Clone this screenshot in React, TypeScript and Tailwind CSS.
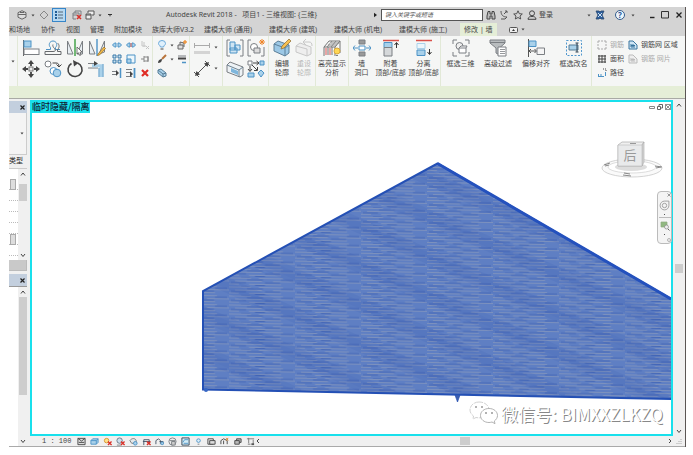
import React from "react";

type Kids = { children?: React.ReactNode };

const FONT = "font-['Noto_Sans','Noto_Sans_CJK_SC',sans-serif]";
const G = "#7b7f83";
const B = "#a9d1ea";
const D = "#4d93c6";

function Art({ s, w, children }: Kids & { s: string; w?: string }) {
  return (
    <svg viewBox={w ?? "0 0 18 18"} className={`${s} block shrink-0`} fill="none" stroke={G} strokeWidth="1" aria-hidden="true">
      {children}
    </svg>
  );
}

function Btn({ label, children, className = "" }: Kids & { label: string; className?: string }) {
  return (
    <button type="button" aria-label={label} className={`flex items-center justify-center ${className}`}>
      {children}
    </button>
  );
}

function Caret({ className = "" }: { className?: string }) {
  return (
    <svg viewBox="0 0 4 3" className={`block h-[3px] w-1 shrink-0 ${className}`} aria-hidden="true">
      <path d="M.5 .5h3L2 2.500z" fill="#444" />
    </svg>
  );
}

function Chevron({ d }: { d: "up" | "down" | "left" | "right" }) {
  const paths = { up: "M1 4.500 3 2l2 2.500", down: "M1 2l2 2.500L5 2", left: "M4 1 2 3l2 2", right: "M2 1l2 2-2 2" };
  return (
    <svg viewBox="0 0 6 6" className="block size-1.5" fill="none" stroke="#444" strokeWidth="1" aria-hidden="true">
      <path d={paths[d]} />
    </svg>
  );
}

const big = "size-[18px]";
const small = "size-[10px]";
const S = "0 0 10 10";

const modifyBig: [string, React.ReactNode][] = [
  ["对齐", <><path d="M1.500 1v16" stroke="#666" /><rect x="2" y="2" width="7" height="6" fill={B} stroke={D} /><rect x="2" y="10" width="15" height="5.500" fill="#fff" /></>],
  ["偏移", <><path d="M2 10.500h4.500V8.500C4 6 5.500 2 9 2s5 4 2.500 6.500v2H16" stroke={D} /><path d="M1 15.500h16v-3h-3.500V11c3-4 1-6 0-7M1 15.500v-3h8c2.500 0 3-1 1.500-3C8 7 9 5.500 9 5.500" stroke="#66696c" /></>],
  ["镜像 - 拾取轴", <><path d="M1.500 15V2L7 15zM16.500 15V2L11 15z" fill="#e8eef2" /><path d="M9 0v17" stroke="#45a34a" strokeWidth="1.500" /><path d="m11 8 5 5-2 .3 1 2.700-1.500.3-1-2.500-1.500 1z" fill="#fff" stroke="#555" strokeWidth=".8" /></>],
  ["镜像 - 绘制轴", <><path d="M1.500 15V2L7 15zM16.500 13V2L11 15z" fill="#e8eef2" /><path d="M9 0v17" stroke={D} strokeWidth="1.400" /><path d="m10 15 6-7 1.500 1.500-6 6.500-2 .5z" fill="#f5bd48" stroke="#966a20" strokeWidth=".7" /></>],
  ["移动", <><path d="M9 2v4M9 12v4M2 9h4M12 9h4" stroke="#444" strokeWidth="1.800" /><path d="M9 0l3 4H6zM9 18l3-4H6zM0 9l4-3v6zM18 9l-4-3v6z" fill="#444" stroke="none" /><rect x="7" y="7" width="4" height="4" fill="#eee" stroke="#777" /></>],
  ["复制", <><circle cx="4" cy="4" r="3" fill="#fff" /><path d="M8.500 3H12c2 0 3 1 3 3.500M12.500 4.500l2.500 2.500 2.500-2.500" stroke="#444" /><circle cx="9.500" cy="11" r="3.500" fill="#fff" stroke={D} /><circle cx="13" cy="13" r="3.800" fill={B} stroke={D} /></>],
  ["旋转", <><path d="M5.500 3.500a7 7 0 1 0 6-.5" stroke="#444" strokeWidth="1.600" /><path d="m7 0 5.500 3L8 6.500z" fill="#444" stroke="none" /></>],
  ["修剪/延伸为角", <><path d="M0 3.500h9M0 8h10" /><path d="M4 5.800h9V17" stroke={B} strokeWidth="3" /><path d="M11 8v9M15 4v13" stroke={D} /><path d="M6 1l4 2.500L6 6z" fill="#444" stroke="none" /></>],
];

const modifySmall: [string, React.ReactNode][] = [
  ["拆分图元", <path d="m.5 5 2-2H4v4H2.500zM9.500 5l-2-2H6v4h1.500z" fill={B} stroke={D} />],
  ["用间隙拆分", <><path d="m.5 5 2-2H4v4H2.500zM9.500 5l-2-2H6v4h1.500z" fill={B} stroke={D} /><path d="M5 3v4" stroke="#d45b51" /></>],
  ["解锁", <g stroke="#c4c4c4"><path d="M2 1v5h4M4 2v5M6 6l3 3M9 6 6 9" /></g>],
  ["阵列", <path d="M1 1h3v3H1zM6 1h3v3H6zM1 6h3v3H1zM6 6h3v3H6z" fill="#c9e2f1" stroke="#3878a8" />],
  ["缩放", <><path d="M1 1h8v8H1z" fill="#edf6fb" stroke={D} /><path d="M1 5h4v4H1z" fill={B} stroke={D} /></>],
  ["锁定", <path d="M1 5h3M4 2v6M4 3h4v4H4M8 2v6" stroke="#888" />],
  ["修剪/延伸单个图元", <><path d="M0 3.500h5M0 6.500h5" /><path d="M4 2l3 3-3 3z" fill="#444" stroke="none" /><path d="M8.500 0v10" stroke={D} strokeWidth="1.500" /></>],
  ["修剪/延伸多个图元", <><path d="M0 1.500h6M0 4.500h5M0 8.500h6" /><path d="M4 3l3 3-3 3z" fill="#444" stroke="none" /><path d="M8.500 0v10" stroke={D} strokeWidth="1.800" /></>],
  ["删除", <path d="m2 2 6 6M8 2 2 8" stroke="#df2c25" strokeWidth="2.200" />],
];

function Tool({ lines, icon, off, w }: { lines: string[]; icon: React.ReactNode; off?: boolean; w: string }) {
  return (
    <button type="button" className={`flex shrink-0 flex-col items-center pt-[3px] text-[7px] leading-[9px] ${w} ${off ? "text-[#b8b8b8]" : "text-[#444]"}`}>
      <Art s="size-[18px] mb-[2px]">{icon}</Art>
      {lines.map((l) => <span key={l} className="whitespace-nowrap">{l}</span>)}
    </button>
  );
}

function Group({ children, className = "" }: Kids & { className?: string }) {
  return <section className={`flex shrink-0 border-r border-[#e2e9d7] ${className}`}>{children}</section>;
}

const bracket = <path d="M4 1H1v16h3M14 1h3v16h-3" />;

function TitleBar() {
  return (
    <header className="flex h-4 items-center bg-[#d4d4d4] pl-2 text-[#444]">
      <Btn label="主视图"><Art s={small} w={S}><path d="m5 .7 4 2v4.500l-4 2-4-2V2.700z" fill="#ddd" stroke="#666" /><path d="M1 4.500h8M3 2.500h4" stroke="#666" /></Art></Btn>
      <Caret className="ml-1" />
      <Btn label="同步" className="ml-1"><Art s={small} w={S}><path d="m5 1 4 4-4 4-4-4z" stroke="#888" /></Art></Btn>
      <button type="button" aria-label="属性" className="ml-[3px] flex h-3.5 w-[14px] items-center justify-center border border-[#3685c8] bg-[#b6d8f1]">
        <Art s={small} w={S}><path d="M1 2h2M1 5h2M1 8h2" stroke="#225c93" strokeWidth="2" /><path d="M4 2h5M4 5h5M4 8h5" stroke="#567" /></Art>
      </button>
      <Btn label="关闭隐藏窗口" className="ml-1.5"><Art s={small} w={S}><path d="M1 9V3h6v3M3 3V1h6v4M1 5h4M1 9h3" /><path d="m5 5 4 4M9 5 5 9" stroke="#d8312b" strokeWidth="1.600" /></Art></Btn>
      <Btn label="切换窗口" className="ml-[3px]"><Art s={small} w={S}><path d="M3 3V1h6v4H7M1 4h5v5H1zM1 5h5" stroke="#555" fill="#eee" /></Art></Btn>
      <Caret className="ml-[3px]" />
      <Caret className="ml-1.5 border-t border-[#333]" />
      <h1 className="ml-[54px] shrink-0 whitespace-pre text-[7px] leading-[10px]">Autodesk Revit 2018 -   项目1 - 三维视图: {"{三维}"}</h1>
      <span className="min-w-0 flex-1" />
      <svg viewBox="0 0 4 6" className="mr-1 h-1.5 w-[3px]" aria-hidden="true"><path d="M0 0l4 3-4 3z" fill="#222" /></svg>
      <input aria-label="搜索" placeholder="键入关键字或短语" className="h-3 w-[102px] border border-[#555] bg-white px-[3px] text-[6px] italic leading-[8px] placeholder:text-[#555]" />
      <Btn label="查找" className="ml-[3px]"><Art s={small} w={S}><path d="M2 1.500h2V4h2V1.500h2L9 6v3H6V6H4v3H1V6z" fill="#bbb" stroke="#444" /></Art></Btn>
      <Btn label="通讯中心" className="ml-[3px]"><Art s={small} w={S}><path d="M2 1c0 4 2 6 6 6L6 9H2M5 4l3-3M6 1h2v2" stroke="#555" /></Art></Btn>
      <Btn label="收藏夹" className="ml-1"><Art s={small} w={S}><path d="m5 .8 1.300 2.900 3 .3L7 6l.7 3L5 7.500 2.300 9 3 6 .7 4l3-.3z" stroke="#444" strokeWidth=".9" /></Art></Btn>
      <button type="button" className="ml-1 flex items-center gap-[2px] text-[7px] leading-[10px]">
        <Art s={small} w={S}><circle cx="5" cy="3.300" r="2.500" stroke="#444" /><path d="M1 9.300C1 7 3 6.500 5 6.500s4 .5 4 2.800z" stroke="#444" /></Art>登录
      </button>
      <Caret className="ml-[34px]" />
      <Btn label="应用商店" className="ml-1"><Art s={small} w={S}><path d="M1 1h3l1 1 1-1h3L7 5l2 4H6L5 8 4 9H1l2-4z" fill="#2d5f9e" stroke="#28466d" strokeWidth=".8" /><path d="m3 3 4 4M7 3 3 7" stroke="#cbdff0" /></Art></Btn>
      <button type="button" aria-label="帮助" className="ml-[10px] flex size-[10px] items-center justify-center rounded-full border border-[#345d8c] bg-[#eef5fb] text-[8px] font-bold leading-[8px] text-[#1e5799]">?</button>
      <Caret className="ml-1.5" />
      <Btn label="最小化" className="ml-[12px]"><Art s={small} w={S}><path d="M3 7.500h4.500" stroke="#222" strokeWidth="1.400" /></Art></Btn>
      <Btn label="最大化" className="ml-[3px]"><Art s={small} w={S}><path d="M1.500 1.500h7v6.500h-7z" stroke="#333" /></Art></Btn>
      <Btn label="关闭" className="ml-1 mr-px"><Art s={small} w={S}><path d="m2.500 2.500 5 5M7.500 2.500l-5 5" stroke="#222" strokeWidth="1.300" /></Art></Btn>
    </header>
  );
}

function Tabs() {
  const t = "shrink-0 whitespace-nowrap";
  return (
    <nav className="flex h-[13px] items-center bg-[#d4d4d4] text-[7px] leading-[11px] text-[#444]">
      <button type="button" className={t}>和场地</button>
      <button type="button" className={`${t} ml-[11px]`}>协作</button>
      <button type="button" className={`${t} ml-[11px]`}>视图</button>
      <button type="button" className={`${t} ml-[10px]`}>管理</button>
      <button type="button" className={`${t} ml-[10px]`}>附加模块</button>
      <button type="button" className={`${t} ml-[10px]`}>族库大师V3.2</button>
      <button type="button" className={`${t} ml-[10px] w-[50px] text-left`}>建模大师 (通用)</button>
      <button type="button" className={`${t} ml-[15px] w-[50px] text-left`}>建模大师 (建筑)</button>
      <button type="button" className={`${t} ml-[15px] w-[50px] text-left`}>建模大师 (机电)</button>
      <button type="button" className={`${t} ml-[15px] w-[50px] text-left`}>建模大师 (施工)</button>
      <button type="button" className={`${t} ml-[11px] h-[13px] bg-[#e5eed7] px-1`}>修改 | 墙</button>
      <button type="button" aria-label="功能区显示" className="ml-[12px] flex items-center gap-[3px]">
        <svg viewBox="0 0 9 6" className="h-1.5 w-[9px]" aria-hidden="true"><rect x=".5" y=".5" width="8" height="5" rx="1" fill="#eee" stroke="#555" /><path d="M3 4l1.500-2L6 4z" fill="#333" /></svg>
        <Caret />
      </button>
    </nav>
  );
}

function Row({ icon, text, off }: { icon: React.ReactNode; text: string; off?: boolean }) {
  return (
    <button type="button" className={`flex h-3.5 items-center gap-[3px] whitespace-nowrap text-[7px] leading-[10px] ${off ? "text-[#aaa]" : "text-[#444]"}`}>
      <Art s={small} w={S}>{icon}</Art>{text}
    </button>
  );
}

function Ribbon() {
  const meshIcon = (c: string, f: string) => <><path d="M1 9V1h4l4 4v4z" stroke={c} fill={f} /><path d="M3 4v3h4M5 4v3M3 5.500h4" stroke={c} /></>;
  return (
    <div className="flex h-[50px] overflow-hidden bg-[#f5f6f5]">
      <Group className="w-[9px] items-center pl-[2px]"><Caret /></Group>
      <Group className="w-[135px] pl-[2px]">
        <div className="mt-px grid h-[42px] grid-cols-[repeat(4,22px)] grid-rows-2">
          {modifyBig.map(([l, i]) => <Btn key={l} label={l}><Art s={big}>{i}</Art></Btn>)}
        </div>
        <div className="ml-[2px] mt-[2px] grid h-[42px] grid-cols-[repeat(3,14px)] grid-rows-3">
          {modifySmall.map(([l, i]) => <Btn key={l} label={l}><Art s={small} w={S}>{i}</Art></Btn>)}
        </div>
      </Group>
      <Group className="w-[37px] pl-px pt-[2px]">
        <div className="grid h-[42px] grid-cols-[16px_4px_16px] grid-rows-3 items-center">
          <Btn label="在视图中隐藏"><Art s={small} w={S}><path d="M3.500 7C3 5 1.500 5 1.500 3.500a3.500 3 0 0 1 7 0C8.500 5 7 5 6.500 7z" fill="#dff0fc" stroke="#6ba9da" /><path d="M3.500 9h3" stroke="#444" /></Art></Btn>
          <Caret />
          <Btn label="置换图元"><Art s={small} w={S}><path d="M1 5h5v4H1zM3 5V2l4 1v4" fill="#ddd" stroke="#666" /><path d="m8 0 .5 1.500L10 2l-1.500.5L8 4l-.5-1.500L6 2l1.500-.5z" fill="#ef8a24" stroke="#ef8a24" strokeWidth=".6" /></Art></Btn>
          <Btn label="替换图形"><Art s={small} w={S}><path d="M9 1 5 5" stroke="#b8743b" strokeWidth="2" /><path d="M1 9c0-3 2-4 4-4 0 3-2 4-4 4z" fill="#444" stroke="none" /></Art></Btn>
          <Caret />
          <Btn label="线处理"><Art s={small} w={S}><path d="M1 2h8" /><path d="M1 4.500h8" stroke="#444" strokeWidth="2" /><path d="M5 8.500h4" stroke={D} strokeWidth="1.500" /></Art></Btn>
          <Btn label="剖切面轮廓"><Art s={small} w={S}><path d="m1 2 3-1 5 4v3L6 9 1 5z" fill={B} stroke="#567d96" /><path d="m1 2 5 4v3M6 6l3-1" stroke="#567d96" /></Art></Btn>
        </div>
      </Group>
      <Group className="w-[33px] pt-px">
        <div className="grid h-[42px] grid-cols-[24px_6px] grid-rows-2 items-center">
          <Btn label="尺寸标注"><Art s={big}><path d="M1.500 4v5M16.500 4v5M2 6.500h14" stroke="#aaa" /><path d="M1 12h16v3H1z" fill="#d4d4d4" stroke="none" /></Art></Btn>
          <Caret />
          <Btn label="测量"><Art s={big}><path d="M3 15 15 3M1 12l5 5M12 1l5 5" stroke="#555" /><path d="m2 16 1.500-5 3.500 3.500zM16 2l-1.500 5L11 3.500z" fill="#444" stroke="none" /></Art></Btn>
          <Caret />
        </div>
      </Group>
      <Group className="w-[46px] pl-px pt-px">
        <div className="grid h-[42px] grid-cols-[repeat(2,21px)] grid-rows-2">
          <Btn label="创建组"><Art s={big}>{bracket}<path d="M4 3h5v8H4zM9 6h5v5H9zM4 9h7v5H4z" fill="#cfe5f3" stroke={D} /></Art></Btn>
          <Btn label="创建类似实例"><Art s={big}><path d="M4 1H1v16h3M14 17h3V8" /><circle cx="7" cy="8" r="3.500" fill="#fff" /><path d="M7 9h6v5H7z" fill="#ddd" /><path d="M15 0v6M12 3h6M13 1l4 4M17 1l-4 4" stroke="#ee8427" /></Art></Btn>
          <Btn label="创建零件"><Art s={big}><path d="m1 5 3-3 13 5v8l-3 2L1 12z" fill="#edf2f5" /><path d="m1 5 12 5v7M13 10l4-3" stroke="#6c8291" /><path d="M5 8 12 11v4L5 12z" fill="#7eb6dc" stroke="none" /></Art></Btn>
          <Btn label="创建部件"><Art s={big}><path d="M1 1h4v4H1z" fill="#fff" /><path d="M13 1h4v4h-4z" fill={B} stroke={D} /><path d="M6 3h6M3 6v5M5 5l5 5" stroke="#444" /><path d="m9.500 1 2.500 2-2.500 2M7 10.500h3.500V7M1 9l2 2.500L5 9" stroke="#444" /><path d="M1 13h6v4H1z" fill={B} stroke={D} /><path d="m14 10 3 3-3 4-3-4z" fill={B} stroke={D} /></Art></Btn>
        </div>
      </Group>
      <Group className="w-[47px] pl-[2px]">
        <Tool w="w-[22px]" lines={["编辑", "轮廓"]} icon={<><path d="m1 5 4-3 11 4v8l-4 3L1 12z" fill="#9cc8e6" stroke="#5d8099" /><path d="m1 5 11 4v8M12 9l4-3" stroke="#5d8099" /><path d="m9 7 7-7 2 2-7 7-3 1z" fill="#f6c052" stroke="#8c6c31" strokeWidth=".7" /></>} />
        <Tool w="w-[22px]" off lines={["重设", "轮廓"]} icon={<g stroke="#c8c8c8"><path d="m1 7 4-3 11 4v7l-4 2L1 13z" fill="#eee" /><path d="m1 7 11 3v7M8 3h6c2 0 3 1 3 4M11 0 8 3l3 3" /></g>} />
      </Group>
      <Group className="w-[33px]">
        <Tool w="w-8" lines={["高亮显示", "分析"]} icon={<><path d="M1 8 6 2h11v12M1 8h11l5-6M1 8v9M12 8v9M5 8v8M9 8v8" stroke="#777" /><path d="M5 6h9M8 4h8M4 8l5-6M8 8l5-6" stroke="#777" strokeWidth=".8" /><path d="M3 9v7M7 9v7" stroke="#dd5555" /><circle cx="14" cy="12" r="3" fill="#ffd754" stroke="#d8a83c" /><path d="M13 16.500h2" /></>} />
      </Group>
      <Group className="w-[92px]">
        <Tool w="w-[25px]" lines={["墙", "洞口"]} icon={<><path d="M6 1h6v4H6zM6 13h6v4H6z" fill="#999" /><path d="M6 7h6v4H6z" fill="#fff" stroke={D} /><path d="M0 9h5M13 9h5" stroke={D} /><path d="m2 6.500-2 2.500 2 2.500M16 6.500 18 9l-2 2.500" stroke={D} /></>} />
        <Tool w="w-[33px]" lines={["附着", "顶部/底部"]} icon={<><path d="M1 1.500h16" stroke="#d9504a" strokeWidth="1.500" /><path d="M2 3.500h8v5H2z" fill={B} stroke={D} /><path d="M2 8.500h8V17H2z" fill="#d5d8da" /><path d="M14.500 9V4M12.500 6l2-2.500 2 2.500" stroke="#333" /></>} />
        <Tool w="w-[33px]" lines={["分离", "顶部/底部"]} icon={<><path d="M1 1.500h16" stroke="#d9504a" strokeWidth="1.500" /><path d="M2 4.500h8v5H2z" fill="#edf6fb" stroke={B} /><path d="M2 11h8v5.500H2z" fill={B} stroke={D} /><path d="M14.500 10v5M12.500 13l2 2.500 2-2.500" stroke="#333" /></>} />
      </Group>
      <Group className="w-[151px] pl-px">
        <Tool w="w-[37px]" lines={["框选三维"]} icon={<><path d="M5 1H1v4M13 1h4v4M1 13v4h4M17 13v4h-4" /><circle cx="7.500" cy="7" r="3.500" fill="#eee" /><path d="M7 9h7v5H7zM7 9l2-2h6l-1 2" fill="#fff" /></>} />
        <Tool w="w-[38px]" lines={["高级过滤"]} icon={<><path d="M1 1h15v3l-5.500 5v7L7 14V9L1 4z" fill="#b9bdbf" /><path d="M1 3.500h15" /><path d="M9 8h8v9H9z" fill="#fff" /><path d="M11 10.500h5M11 12.500h5M11 14.500h5" strokeWidth=".8" /></>} />
        <Tool w="w-[38px]" lines={["偏移对齐"]} icon={<><path d="M1.500 0v18M2 12h7M4 10l-2 2 2 2M7.500 10l2 2-2 2" stroke="#555" /><path d="M2 2h7v5.500H2z" fill={B} stroke={D} /><path d="M10 9h7.500v6.500H10z" fill="#f5f5f5" /></>} />
        <Tool w="w-[37px]" lines={["框选改名"]} icon={<><path d="M1.500 1.500h15v15h-15z" stroke="#5298ce" strokeDasharray="2 1.500" /><path d="M4 6h9v5H4z" fill={B} stroke="#567d96" /><path d="M12 4v9M10.500 4h3M10.500 13h3" stroke="#345" /></>} />
      </Group>
      <section className="flex min-w-0 flex-1 gap-1 pl-[5px] pt-[2px]">
        <div className="flex flex-col items-start">
          <Row off text="钢筋" icon={<path d="M3 1H1v2M7 1h2v2M1 7v2h2M9 7v2H7M1 4v2M9 4v2M4 1h2M4 9h2" stroke="#aaa" />} />
          <Row text="面积" icon={<path d="M1 2h8M1 5h8M1 8h8M2 1v8M5 1v8M8 1v8" stroke="#444" />} />
          <Row text="路径" icon={<><path d="M1 8.500h6M8.500 8V4M1.500 6v2M4 6v2" stroke={D} /><path d="M6 1h3v2" stroke="#444" strokeDasharray="1 1" /></>} />
        </div>
        <div className="flex flex-col items-start">
          <Row text="钢筋网 区域" icon={meshIcon("#38759e", "#cfe5f4")} />
          <Row off text="钢筋 网片" icon={meshIcon("#bbb", "#eee")} />
        </div>
      </section>
    </div>
  );
}

function PanelHead({ label }: { label: string }) {
  return (
    <div className="flex h-[12px] items-center justify-end bg-[#c3cfde] pr-[2px]">
      <Btn label={label}><svg viewBox="0 0 5 5" className="size-[5px]" aria-hidden="true"><path d="m.5.5 4 4M4.500.5l-4 4" stroke="#222" strokeWidth="1.200" /></svg></Btn>
    </div>
  );
}

function LeftPanels() {
  return (
    <aside className="flex w-[18px] shrink-0 flex-col bg-[#f0f0f0] pt-px">
      <PanelHead label="关闭属性" />
      <div className="flex h-[42px] items-center justify-end border-b border-r border-[#ccc] bg-[#f4f4f4] pr-[2px]"><Caret /></div>
      <div className="h-[13px] whitespace-nowrap text-[7px] leading-[12px] text-[#222]">类型</div>
      <div className="flex h-[92px] border-t border-[#ccc]">
        <div className="flex-1 bg-white pt-[10px]">
          {[0, 1, 2, 3, 4, 5, 6].map((n) => (
            <div key={n} className="flex h-[11px] justify-end border-b border-dotted border-[#bbb] pr-[2px]">
              {(n === 0 || n === 5) && <button type="button" aria-label="编辑值" className="h-[11px] w-[6px] border border-[#aaa] bg-[#ddd]" />}
            </div>
          ))}
        </div>
        <div className="flex w-[9px] flex-col items-center bg-[#f0f0f0] py-[2px]">
          <Chevron d="up" /><span className="mt-[7px] h-[17px] w-2 bg-[#cdcdcd]" /><span className="flex-1" /><Chevron d="down" />
        </div>
      </div>
      <button type="button" aria-label="应用" className="h-[11px] border-b border-r border-[#bbb] bg-[#c9c9c9]" />
      <div className="h-[3px]" />
      <PanelHead label="关闭项目浏览器" />
      <div className="flex flex-1 border-t border-[#999]">
        <div className="flex-1 bg-white" />
        <div className="flex w-[9px] flex-col items-center bg-[#f0f0f0] py-[2px]">
          <Chevron d="up" /><span className="mt-[2px] h-[98px] w-2 bg-[#cdcdcd]" /><span className="flex-1" /><Chevron d="down" />
        </div>
      </div>
    </aside>
  );
}

function Model() {
  return (
    <svg viewBox="0 0 640 332" className="block h-[332px] w-full" preserveAspectRatio="xMaxYMin slice" role="img" aria-label="三维墙体">
      <defs>
        <pattern id="courses" width="66" height="9" patternUnits="userSpaceOnUse" patternTransform="skewY(1)">
          <rect width="66" height="9" fill="#5f7fc3" />
          <path d="M0 1.500h22M30 1.500h24M6 4.500h27M44 4.500h22M0 7.500h10M20 7.500h32" stroke="#7c91be" strokeWidth="1" />
          <path d="M18 3h16M52 3h12M2 6h15M36 6h15M12 0h9M26 8.500h10" stroke="#4669b8" strokeWidth="1" />
        </pattern>
        <pattern id="band" width="150" height="36" patternUnits="userSpaceOnUse" patternTransform="rotate(24)">
          <path d="M0 8h150v15H0z" fill="#2448a8" opacity=".09" />
          <path d="M0 12h150v7H0z" fill="#2448a8" opacity=".08" />
        </pattern>
      </defs>
      <path d="M172 189 406.500 61.500 640 197v100L172 287.500z" fill="url(#courses)" />
      <path d="M172 189 406.500 61.500 640 197v100L172 287.500z" fill="url(#band)" />
      <path d="M640 197 406.500 61.500 172 189v98.500L640 297" fill="none" stroke="#2450b5" strokeWidth="2" />
      <path d="M406.500 61.500 640 197" stroke="#2451bd" strokeWidth="3" />
      <circle cx="175" cy="288" r="2" fill="#3767c5" />
      <path d="M424 293h5l-2.500 7z" fill="#3d5fae" stroke="#2450b5" strokeWidth=".7" />
    </svg>
  );
}

function ViewCube() {
  return (
    <svg viewBox="0 0 64 42" className="absolute right-[7px] top-[37px] h-[42px] w-16" role="img" aria-label="ViewCube 后">
      <ellipse cx="32" cy="29" rx="30" ry="9" fill="#fafafa" stroke="#c8c8c8" strokeWidth=".8" />
      <ellipse cx="32" cy="28" rx="24" ry="6" fill="#fff" stroke="#d4d4d4" strokeWidth=".8" />
      <ellipse cx="31" cy="28" rx="16" ry="4" fill="#bbb" opacity=".5" />
      <path d="m4 26 6-2M5 27l4-1M55 27l7 1M56 29l5-1M23 36l8 1M24 34l6 1" stroke="#888" strokeWidth="1" />
      <path d="m18 6 4-3h22l-2 3v21H18z" fill="#f0f0f0" stroke="#aaa" strokeWidth=".7" />
      <path d="m42 6 2-3v20l-2 4z" fill="#d8d8d8" stroke="#aaa" strokeWidth=".6" />
      <path d="M18 6h24v21H18z" fill="#e9eaeb" stroke="#bbb" strokeWidth=".6" />
      <path d="M30 4.500h6" stroke="#999" />
      <text x="30" y="21" textAnchor="middle" fontSize="13" fill="#999" fontFamily="Noto Sans CJK SC, sans-serif">后</text>
    </svg>
  );
}

function NavBar() {
  return (
    <div className="absolute -right-px top-[89px] flex h-[53px] w-[15px] flex-col items-center justify-between rounded-sm border border-[#bbb] bg-[#f4f4f4] py-px">
      <Btn label="关闭导航栏" className="self-end"><svg viewBox="0 0 4 4" className="size-1"><path d="m.5.5 3 3M3.500.5l-3 3" stroke="#999" /></svg></Btn>
      <Btn label="控制盘"><Art s="size-[11px]" w={S}><path d="M9 1v4a4 4 0 1 1-4-4z" stroke="#999" strokeWidth=".8" /><circle cx="5" cy="5" r="2" stroke="#999" strokeWidth=".8" /></Art></Btn>
      <span className="size-px bg-[#555]" />
      <span className="h-px w-3 bg-[#bbb]" />
      <Btn label="缩放区域"><Art s={small} w={S}><path d="M1 1h6v5H1z" fill="#91b881" stroke="#8cab80" strokeWidth=".7" /><circle cx="6.500" cy="6" r="2" fill="#eee" stroke="#888" strokeWidth=".7" /><path d="m8 8 1.500 1.500" stroke="#666" /></Art></Btn>
      <span className="size-px bg-[#555]" />
      <Btn label="导航栏选项" className="self-end"><svg viewBox="0 0 4 4" className="size-1"><circle cx="2" cy="2" r="1.500" fill="none" stroke="#999" strokeWidth=".7" /></svg></Btn>
    </div>
  );
}

function Watermark() {
  return (
    <div className="absolute bottom-[8px] right-2 flex items-center gap-[2px]">
      <svg viewBox="0 0 30 25" className="h-[25px] w-[30px]" fill="#fff" stroke="#aaa" strokeWidth=".9" aria-hidden="true">
        <path d="M10 1C5 1 1 4.500 1 9c0 2.500 1.500 4.500 3.500 6L4 18l3-1.500c7 1.500 13-2 13-7.500 0-4.500-4-8-10-8z" stroke="#ccc" strokeDasharray="5 1" />
        <path d="M20 7.500c-5 0-8.500 3.200-8.500 7s3.500 7 8.500 7c1 0 2-.2 3-.5l3 1.700-.7-2.700c2-1.400 3.200-3.300 3.200-5.500 0-3.800-3.500-7-8.500-7z" />
        <g fill="#999" stroke="none"><circle cx="7" cy="6" r="1" /><circle cx="13" cy="6" r="1" /><circle cx="17" cy="12" r="1" /><circle cx="23" cy="12" r="1" /></g>
      </svg>
      <span className="whitespace-nowrap font-['Noto_Sans_CJK_SC',sans-serif] text-[17px] leading-[22px] text-white [text-shadow:1px_1px_0_#888]">微信号: BIMXXZLKZQ</span>
    </div>
  );
}

const cube = <path d="m1 4 2-2h6v4L7 8H1zM1 4h6v4M7 4l2-2" fill={B} stroke={D} />;
const redX = <path d="m5.500 5 4 4M9.500 5l-4 4" stroke="#d93129" strokeWidth="1.500" />;
const statusIcons: [string, React.ReactNode][] = [
  ["详细程度", <><path d="M1 1.500h8v7H1z" fill="#ddd" stroke="#444" /><path d="m1 1.500 4 3 4-3M2 6h6" stroke="#444" /></>],
  ["视觉样式", cube],
  ["日光路径", <><circle cx="4" cy="4" r="2.500" fill="#ffe18a" stroke="#d6962c" />{redX}</>],
  ["阴影", <><circle cx="4" cy="4" r="3" fill="#cde0ee" stroke="#678" /><path d="M1 9h5" />{redX}</>],
  ["渲染", <><path d="M1 4c2-3 6-3 7 0v3H3z" fill="#e3e8eb" stroke="#777" /><circle cx="7" cy="7" r="2" fill={B} stroke={D} /></>],
  ["裁剪视图", <><path d="M2 9V3h6v5M1 5h8" stroke="#456" />{redX}</>],
  ["裁剪区域", <><path d="M1 8V4l3-2 2 2v4M5 5h4v3" stroke="#456" /><circle cx="8" cy="7" r="1.500" fill={B} stroke={D} /></>],
  ["锁定视图", <><circle cx="5" cy="5" r="4" fill="#eee" /><path d="M4 5h4v4H4zM2 4h6" fill="#ccc" /></>],
  ["临时隐藏/隔离", <><path d="M1 1h8v8H1z" fill="#d3edf7" stroke="#345" /><path d="M2 6l2-3h4M3 7h5" stroke={D} /></>],
  ["显示隐藏图元", <><circle cx="5" cy="4" r="2" fill="#dff0fa" stroke={D} /><path d="M4 8h2" /></>],
  ["临时视图属性", <><path d="M1 2h6v6H1z" fill="#eee" stroke="#444" /><path d="M3 4h6v4H3z" fill="#ddd" stroke="#444" /></>],
  ["分析模型", <><path d="M1 8V4l3-2 4 2v4M4 4v4" stroke="#444" /><path d="m7 1 2 3M9 1 7 4" stroke="#d98329" /></>],
  ["位移集", <><path d="M2 4h5v4H2zM4 4V2h5v4H7" fill="#bbb" stroke="#444" /></>],
  ["显示约束", <><path d="M1 2h8M3 1v6M8 3v5M2 8h3" stroke="#777" /><path d="M6 7h3v2H6z" fill="#555" stroke="none" /></>],
];

export default function App() {
  return (
    <main className={`${FONT} bg-white pb-2 pl-[9px] pr-[7px] pt-[7px]`}>
      <div className="border-r border-[#5b5654]">
        <TitleBar />
        <Tabs />
        <Ribbon />
        <div className="h-[13px] border-b border-[#a9aaa5] bg-[#e5eed7]" />
        <div className="flex border-b border-[#aaa] bg-[#f0f0f0] pt-px">
          <LeftPanels />
          <div className="ml-[3px] min-w-0 flex-1">
            <div className="flex">
              <section className="relative min-w-0 flex-1 border-2 border-[#19e0ec] bg-white">
                <Model />
                <div className="absolute left-0 top-0 h-[11px] bg-[#19e0ec] font-['Noto_Sans_CJK_SC',sans-serif] text-[9px] font-medium leading-[10px] text-[#123]">临时隐藏/隔离</div>
                <div className="absolute right-0 top-[2px] flex gap-[2px]">
                  <Btn label="最小化视图"><svg viewBox="0 0 6 6" className="size-1.5"><path d="M.5 2.500h5v2h-5z" fill="none" stroke="#888" /></svg></Btn>
                  <Btn label="还原视图"><svg viewBox="0 0 6 6" className="size-1.5"><path d="M.5 2.500h3v3h-3zM2 2V.5h3.500V4H4" fill="none" stroke="#666" /></svg></Btn>
                  <Btn label="关闭视图"><svg viewBox="0 0 6 6" className="size-1.5"><path d="m.5.5 5 5M5.500.5l-5 5M.5.5h5v5h-5z" fill="none" stroke="#777" strokeWidth=".8" /></svg></Btn>
                </div>
                <ViewCube />
                <NavBar />
                <Watermark />
              </section>
              <div className="flex w-3 shrink-0 flex-col items-center bg-[#f0f0f0] py-[2px]">
                <Chevron d="up" /><span className="mt-[156px] h-[9px] w-2 bg-[#cdcdcd]" /><span className="flex-1" /><Chevron d="down" />
              </div>
            </div>
            <footer className="flex h-[10px] items-center">
              <button type="button" className="ml-[12px] w-[35px] shrink-0 whitespace-nowrap text-left font-['Liberation_Mono',monospace] text-[7px] leading-[9px] text-[#444]">1 : 100</button>
              <div className="flex gap-1">
                {statusIcons.map(([l, i]) => <Btn key={l} label={l} className="w-[9px]"><Art s="size-[9px]" w={S}>{i}</Art></Btn>)}
              </div>
              <Chevron d="left" />
              <span className="flex-1" />
              <span className="h-2 w-[10px] bg-[#cdcdcd]" />
              <span className="w-[197px]" />
              <Chevron d="right" />
              <svg viewBox="0 0 6 6" className="ml-[3px] mr-[3px] size-1.5" aria-hidden="true"><path d="M5 1v5M3 3v3M1 5v1" stroke="#aaa" strokeDasharray="1 1" /></svg>
            </footer>
          </div>
        </div>
      </div>
    </main>
  );
}
